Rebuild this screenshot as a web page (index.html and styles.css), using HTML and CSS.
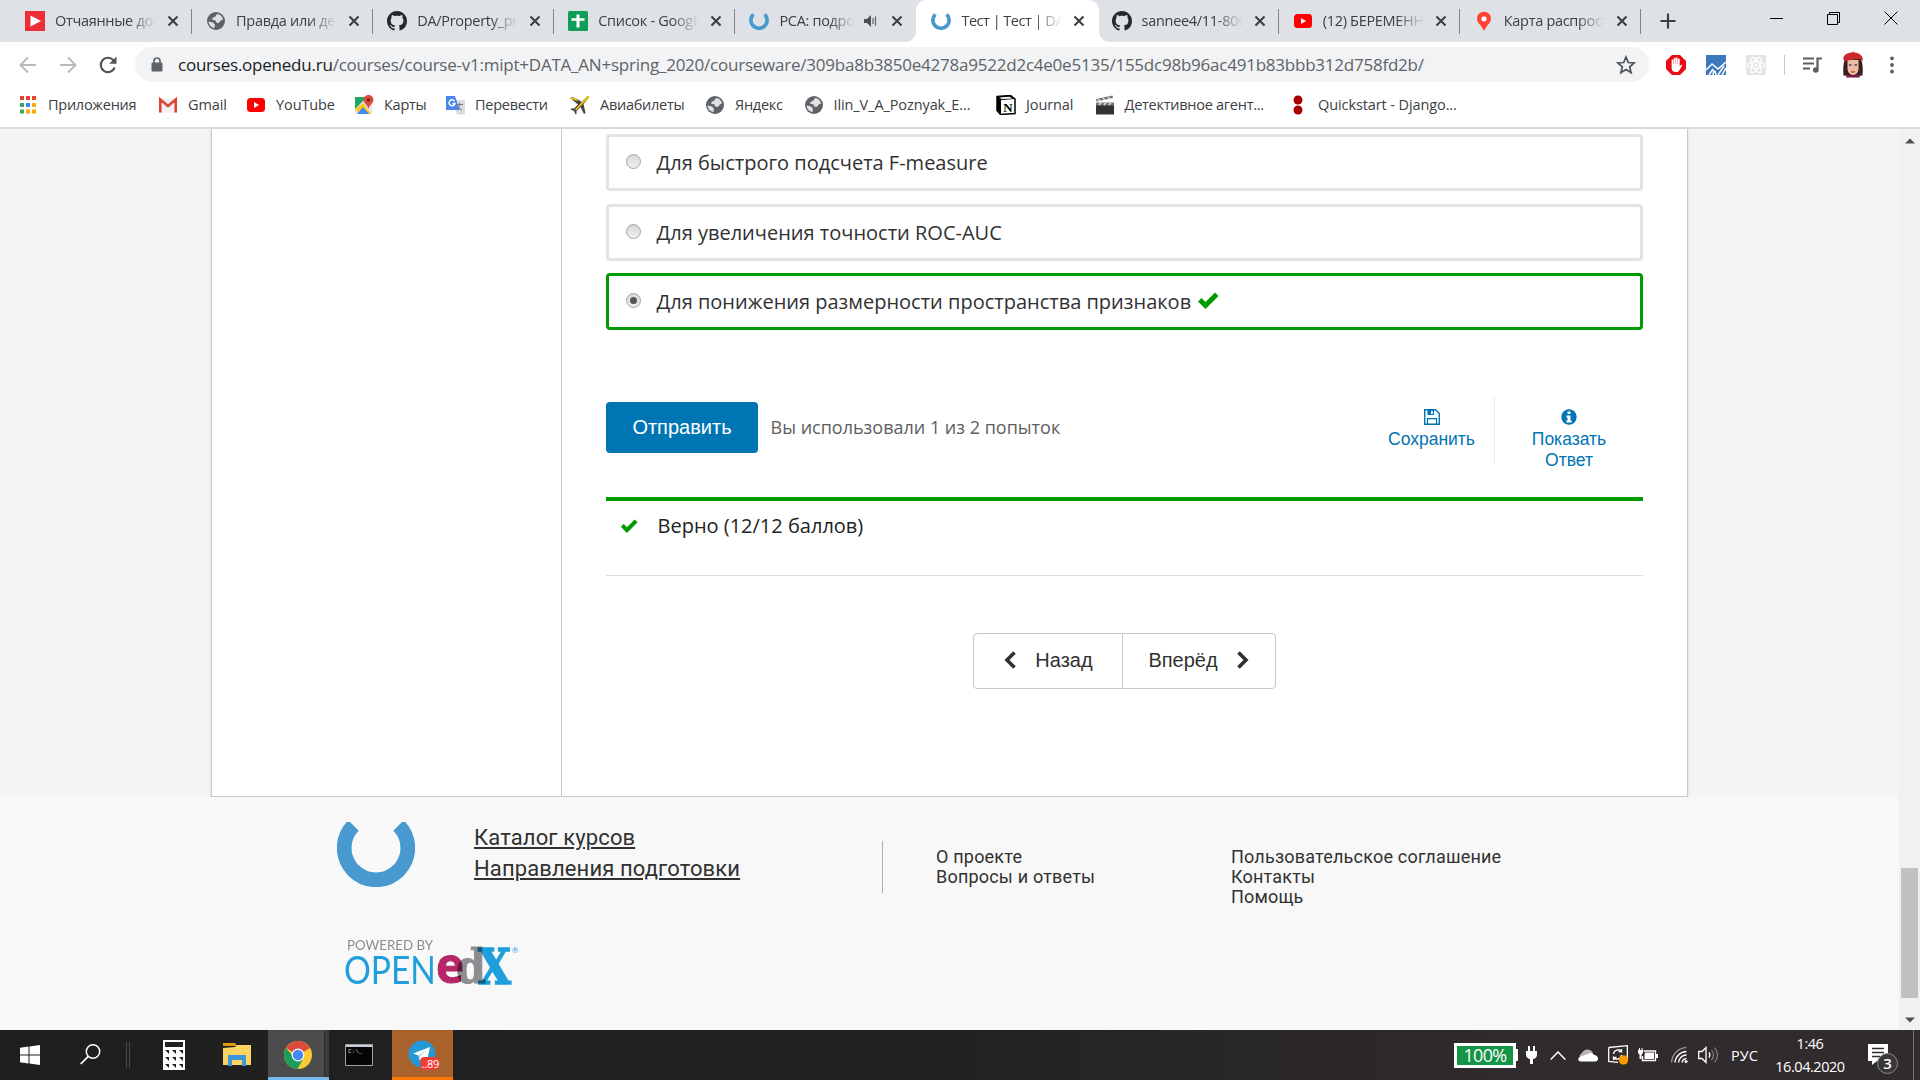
FILE: index.html
```html
<!DOCTYPE html>
<html lang="ru">
<head>
<meta charset="utf-8">
<title>Тест | Тест | DATA_AN</title>
<link rel="stylesheet" href="styles.css">
</head>
<body>
<svg class="defs" width="0" height="0">
  <symbol id="close" viewBox="0 0 12 12"><path d="M1.5 1.5l9 9M10.5 1.5l-9 9" stroke="#3c4043" stroke-width="2.1" fill="none"/></symbol>
  <symbol id="globe" viewBox="0 0 20 20"><circle cx="10" cy="10" r="9" fill="#5f6368"/><path d="M11 3c3 .3 5.6 2.600 6 5.400l-2.200 1.200-2 2.400-2.800-.6-.6-2.200-3-.2V7l3-1.500z" fill="#dee1e6"/><path d="M2.600 10.500l4.400 1 2 2.300-.5 3.200C5 16.500 2.600 13.600 2.600 10.500z" fill="#dee1e6"/></symbol>
  <symbol id="github" viewBox="0 0 16 16"><path fill="#24292e" fill-rule="evenodd" d="M8 0C3.580 0 0 3.580 0 8c0 3.540 2.290 6.530 5.470 7.590.4.070.55-.17.55-.38 0-.19-.01-.82-.01-1.490-2.010.37-2.530-.49-2.690-.94-.09-.23-.48-.94-.82-1.130-.28-.15-.68-.52-.01-.53.63-.01 1.080.58 1.230.82.72 1.210 1.870.87 2.330.66.070-.52.28-.87.51-1.070-1.780-.2-3.640-.89-3.640-3.950 0-.87.31-1.590.82-2.150-.08-.2-.36-1.020.08-2.120 0 0 .67-.21 2.200.82.640-.18 1.320-.27 2-.27s1.360.09 2 .27c1.530-1.040 2.200-.82 2.200-.82.44 1.100.16 1.920.08 2.120.51.56.82 1.270.82 2.150 0 3.070-1.870 3.750-3.650 3.950.29.25.54.73.54 1.480 0 1.070-.01 1.930-.01 2.200 0 .21.15.46.55.38A8.010 8.010 0 0 0 16 8c0-4.420-3.580-8-8-8z"/></symbol>
  <symbol id="youtube" viewBox="0 0 20 20"><rect x="1" y="3" width="18" height="14" rx="3.500" fill="#f00"/><path d="M8 7v6l5-3z" fill="#fff"/></symbol>
  <symbol id="ring" viewBox="0 0 78 78"><path d="M17 13A31.700 31.700 0 1 0 61 13" fill="none" stroke="#4799cf" stroke-width="14.500"/></symbol>
  <symbol id="check" viewBox="0 0 22 17"><path d="M1 9.500L4.500 6l4 4L18 .5 21.500 4 8.500 17z" fill="#009b00"/></symbol>
</svg>

<header class="browser">
  <div class="tabs">
    <div class="tab"><svg class="fav" viewBox="0 0 20 20"><path d="M0 0h20v20H0z" fill="#ee2e36"/><path d="M5.500 4.500v11L16 10z" fill="#fff"/></svg><span class="tab-title">Отчаянные домохозяйки</span><svg class="x"><use href="#close"/></svg></div>
    <div class="tab"><svg class="fav"><use href="#globe"/></svg><span class="tab-title">Правда или действие</span><svg class="x"><use href="#close"/></svg></div>
    <div class="tab"><svg class="fav"><use href="#github"/></svg><span class="tab-title">DA/Property_prices</span><svg class="x"><use href="#close"/></svg></div>
    <div class="tab"><svg class="fav" viewBox="0 0 20 20"><rect width="20" height="20" rx="1.500" fill="#0f9d58"/><path d="M8.500 3.500h3v3.700h5v2.600h-5v6.700h-3V9.800h-5V7.200h5z" fill="#fff"/></svg><span class="tab-title">Список - Google Таблицы</span><svg class="x"><use href="#close"/></svg></div>
    <div class="tab last"><svg class="fav"><use href="#ring"/></svg><span class="tab-title short">PCA: подробности</span><svg class="snd" viewBox="0 0 14 12"><path d="M0 4h3l4-4v12L3 8H0z" fill="#4a4d51"/><path d="M9 3v6M11.500 1.500v9" stroke="#5f6368" stroke-width="1.200"/></svg><svg class="x"><use href="#close"/></svg></div>
    <div class="tab active"><svg class="fav"><use href="#ring"/></svg><span class="tab-title">Тест | Тест | DATA_AN</span><svg class="x"><use href="#close"/></svg></div>
    <div class="tab"><svg class="fav"><use href="#github"/></svg><span class="tab-title">sannee4/11-806</span><svg class="x"><use href="#close"/></svg></div>
    <div class="tab"><svg class="fav"><use href="#youtube"/></svg><span class="tab-title">(12) БЕРЕМЕННА В 16</span><svg class="x"><use href="#close"/></svg></div>
    <div class="tab"><svg class="fav" viewBox="0 0 20 20"><path d="M10 .8c4 0 7 3 7 7 0 4.500-4.600 6.500-6.500 11.500h-1C7.600 14.300 3 12.300 3 7.800c0-4 3-7 7-7z" fill="#f43"/><circle cx="10" cy="7.800" r="2.600" fill="#fff"/></svg><span class="tab-title">Карта распространения</span><svg class="x"><use href="#close"/></svg></div>
    <svg class="plus" viewBox="0 0 16 16"><path d="M8 .5v15M.5 8h15" stroke="#3c4043" stroke-width="2.200"/></svg>
    <div class="win">
      <svg viewBox="0 0 14 14"><path d="M0 7.500h13" stroke="#000"/></svg>
      <svg viewBox="0 0 14 14"><path d="M.5 3.500h10v10H.5zM2.500 3.500v-2h10v10h-2" stroke="#000" fill="none"/></svg>
      <svg viewBox="0 0 14 14"><path d="M.5.5l13 13M13.500.5l-13 13" stroke="#000"/></svg>
    </div>
  </div>

  <div class="toolbar">
    <svg class="nav-i" viewBox="0 0 18 18"><path d="M17 9H2M9 1.500L1.500 9 9 16.500" stroke="#b8babd" stroke-width="2" fill="none"/></svg>
    <svg class="nav-i" viewBox="0 0 18 18"><path d="M1 9h15M9 1.500L16.500 9 9 16.500" stroke="#b8babd" stroke-width="2" fill="none"/></svg>
    <svg class="nav-i" viewBox="0 0 18 18"><path d="M15.700 11.500A7.200 7.200 0 1 1 14.500 4.300L16 6" stroke="#505357" stroke-width="2.100" fill="none"/><path d="M17.500.5v7.300h-7.300z" fill="#505357"/></svg>
    <div class="omni">
      <svg class="lock" viewBox="0 0 12 15"><path d="M3 6.500V4a3 3 0 0 1 6 0v2.500" fill="none" stroke="#5f6368" stroke-width="1.700"/><rect x=".5" y="5.500" width="11" height="9" rx="1.200" fill="#5f6368"/></svg>
      <span class="url"><b>courses.openedu.ru</b>/courses/course-v1:mipt+DATA_AN+spring_2020/courseware/309ba8b3850e4278a9522d2c4e0e5135/155dc98b96ac491b83bbb312d758fd2b/</span>
      <svg class="star" viewBox="0 0 20 20"><path d="M10 2l2.300 5.500 5.900.5-4.500 3.900 1.400 5.800L10 14.600l-5.100 3.100 1.400-5.800L1.800 8l5.900-.5z" fill="none" stroke="#505357" stroke-width="1.700"/></svg>
    </div>
    <div class="ext">
      <svg width="20" height="20" viewBox="0 0 20 20"><path d="M6 0h8l6 6v8l-6 6H6l-6-6V6z" fill="#e80c12"/><path d="M5.600 10V5.500a.9.900 0 0 1 1.800 0V9h.3V3.700a.9.900 0 0 1 1.800 0V9h.3V3.200a.9.900 0 0 1 1.800 0V9h.3V4.400a.9.900 0 0 1 1.800 0v7l1-1.400c.8-.7 1.600 0 1.200.8l-2.400 4.400C12.500 16.600 11.500 17 10 17c-3 0-4.400-1.500-4.400-4z" fill="#fff"/></svg>
      <svg width="20" height="20" viewBox="0 0 20 20"><path d="M0 0h20v20H0z" fill="#3c78bd"/><path d="M0 15l6-6 6 5 8-7M3 20l4-6M7 20l1-5M10 20l-1-4M12 20l6-9M16 20l4-7" stroke="#fff" stroke-width="1.500" fill="none"/></svg>
      <svg width="20" height="20" viewBox="0 0 20 20"><rect width="20" height="20" rx="1" fill="#e4e4e4"/><g fill="none" stroke="#fff" stroke-width="1.200"><ellipse cx="10" cy="10" rx="8.500" ry="3.500"/><ellipse cx="10" cy="10" rx="8.500" ry="3.500" transform="rotate(60 10 10)"/><ellipse cx="10" cy="10" rx="8.500" ry="3.500" transform="rotate(120 10 10)"/></g><circle cx="10" cy="10" r="1.700" fill="#fff"/></svg>
      <i></i>
      <svg width="20" height="20" viewBox="0 0 20 20"><path d="M1 3.500h11M1 8.500h11M1 13.500h7" stroke="#5a5d61" stroke-width="2"/><path d="M15.500 15V3.500H20" stroke="#5a5d61" stroke-width="2.200" fill="none"/><circle cx="13.800" cy="15" r="2.800" fill="#5a5d61"/></svg>
      <svg width="22" height="27" viewBox="0 0 22 27"><path d="M3 8C1 13 1 20 1.500 24.500L7 25h9l4.500-.5C21 19 21 13 19 8z" fill="#33201f"/><path d="M5 24h12l1 2.500H4z" fill="#7b1540"/><path d="M5.500 9h11v9c0 3-2.500 6-5.500 6s-5.500-3-5.500-6z" fill="#f0bda2"/><path d="M1.500 8.500C.5 4 6 1.500 10.500 1.500L11 0l1 1.500C18 1.500 22 6 20.500 10c-3-2.500-6-2-9.500-1.500-4 .6-6 1.500-8.500 2z" fill="#c9272d"/><path d="M7 14h2.500M12.500 14H15" stroke="#34495b" stroke-width="1.600"/><path d="M9 20.500q2 1.200 4 0" stroke="#c0403f" stroke-width="1.400" fill="none"/></svg>
      <svg class="dots" width="6" height="20" viewBox="0 0 6 20"><g fill="#5a5d61"><circle cx="3" cy="3.300" r="1.900"/><circle cx="3" cy="10" r="1.900"/><circle cx="3" cy="16.500" r="1.900"/></g></svg>
    </div>
  </div>

  <nav class="bookmarks">
    <a><svg viewBox="0 0 20 20"><g fill="#ea4335"><path d="M2 1h4v4H2zM8 1h4v4H8zM14 1h4v4h-4z"/></g><path d="M2 8h4v4H2zM2 14.500h4v4H2z" fill="#34a853"/><path d="M8 8h4v4H8z" fill="#4285f4"/><path d="M14 8h4v4h-4zM8 14.500h4v4H8zM14 14.500h4v4h-4z" fill="#fbab05"/></svg><span>Приложения</span></a>
    <a><svg viewBox="0 0 20 20"><path d="M1 3.500h18v14H1z" fill="#f1f1f1"/><path d="M2.300 17.500V4.500L10 11l7.700-6.500v13" stroke="#dc4437" stroke-width="2.600" fill="none"/></svg><span class="lat">Gmail</span></a>
    <a><svg><use href="#youtube"/></svg><span class="lat">YouTube</span></a>
    <a><svg viewBox="0 0 20 20"><path d="M1 2h17v17H1z" fill="#e3e4e6"/><path d="M1 2h12L1 14z" fill="#22a565"/><path d="M1 14l8-6 8 11H6z" fill="#fbc91d"/><path d="M3 19l6-7 6 7z" fill="#4688f1"/><path d="M14.500 0c3 0 5 2.200 5 4.800 0 3.400-4 5-5 9.200-1-4.200-5-5.800-5-9.200 0-2.600 2-4.800 5-4.800z" fill="#dd4b3e"/><circle cx="14.500" cy="5" r="1.800" fill="#7c231c"/></svg><span>Карты</span></a>
    <a><svg viewBox="0 0 20 20"><path d="M8 5h12v14.500h-8z" fill="#d9dbdf"/><path d="M1 1h9l4.500 14H1z" fill="#4a86ee"/><path d="M11 9.500h7M14.500 8v2c0 2-2 4-3 5M13 11.500c1 2 3 3 4 3.500" stroke="#6b7b8c" fill="none"/><path d="M9.500 6A3 3 0 1 0 10 8.500H7.500" stroke="#fff" stroke-width="1.400" fill="none"/></svg><span>Перевести</span></a>
    <a><svg viewBox="0 0 20 20"><path d="M2 2l7 3 2.500 2L17 1.500c1-.8 2.500-.5 2 1L13.500 9l2 9-1.500 1-3.500-7-4 4v3l-1 .5L4 16l-3.500-1.500.5-1h3l4-4L0 3z" fill="#47453f"/><path d="M5 14.500L17 1.500c1-.8 2.500-.5 2 1L6 15.500zM1 2l7 3-1 1-6-2z" fill="#f8c70b"/></svg><span>Авиабилеты</span></a>
    <a><svg><use href="#globe"/></svg><span>Яндекс</span></a>
    <a><svg><use href="#globe"/></svg><span class="lat">Ilin_V_A_Poznyak_E...</span></a>
    <a><svg viewBox="0 0 20 20"><path d="M1 1.500L14.500.5 19 4v14.500L4.500 19.500 1 15.500z" fill="#fff" stroke="#000" stroke-width="1.500"/><path d="M1 1.500L5 5v14L1 15.500zM1 1.500L14.500.5 19 4 5 5z" fill="#000"/><path d="M3 2.600l10.500-.8 3 1.700-10.500.5z" fill="#fff"/><text x="11.800" y="16.700" class="glyph-n">N</text></svg><span class="lat">Journal</span></a>
    <a><svg viewBox="0 0 20 20"><path d="M1 9h18v10.500H1z" fill="#333"/><path d="M1 7.500h18v3H1zM1 4L17.500.5 18 3 1.500 6.500z" fill="#777"/><path d="M3 4l2 2M8 3l2 2M13 2l2 2M4 10l2-2.500M9 10l2-2.500M14 10l2-2.500" stroke="#ddd" stroke-width="1.500"/></svg><span>Детективное агент...</span></a>
    <a><svg viewBox="0 0 20 20"><circle cx="10" cy="5" r="4.500" fill="#a80000"/><circle cx="10" cy="15" r="4.500" fill="#a80000"/></svg><span class="lat">Quickstart - Django...</span></a>
  </nav>
</header>

<div class="viewport">
  <div class="page">
    <div class="course">
      <aside class="side"></aside>
      <main class="main">
        <label class="opt"><i class="radio"></i><span>Для быстрого подсчета F-measure</span></label>
        <label class="opt"><i class="radio"></i><span>Для увеличения точности ROC-AUC</span></label>
        <label class="opt ok"><i class="radio on"></i><span>Для понижения размерности пространства признаков</span><svg class="tick"><use href="#check"/></svg></label>
        <div class="action">
          <button class="submit"><span>Отправить</span></button>
          <span class="attempts">Вы использовали 1 из 2 попыток</span>
          <div class="save"><svg viewBox="0 0 16 16"><path d="M.7.7h10.800l3.800 3.800v10.800H.7z" fill="none" stroke="#0075b4" stroke-width="1.400"/><path d="M3.500 1h6.500v5H3.500z" fill="#0075b4"/><path d="M7 2h1.800v3H7z" fill="#fff"/><path d="M3.500 15V9.700h9V15" fill="none" stroke="#0075b4" stroke-width="1.300"/></svg><span>Сохранить</span></div>
          <div class="show"><svg viewBox="0 0 16 16"><circle cx="8" cy="8" r="7.700" fill="#0075b4"/><path d="M6.500 2.500h3V5h-3zM5.500 6.500h4v5h1.200v2H5.300v-2h1.200v-3h-1z" fill="#fff"/></svg><span>Показать<br>Ответ</span></div>
        </div>
        <div class="result"><svg class="tick"><use href="#check"/></svg><span>Верно (12/12 баллов)</span></div>
        <div class="pager">
          <button><svg viewBox="0 0 12 18"><path d="M10.500 1.500L3 9l7.500 7.500" stroke="#313131" stroke-width="3.600" fill="none"/></svg><span>Назад</span></button>
          <button><span>Вперёд</span><svg viewBox="0 0 12 18"><path d="M1.500 1.500L9 9l-7.500 7.500" stroke="#313131" stroke-width="3.600" fill="none"/></svg></button>
        </div>
      </main>
    </div>
    <footer class="footer">
      <div class="foot-row">
        <svg class="logo" viewBox="0 0 78 65"><path d="M16.500 3.500A31.800 31.800 0 1 0 61.500 3.500" fill="none" stroke="#4799cf" stroke-width="14.700"/></svg>
        <div class="big"><a>Каталог курсов</a><a>Направления подготовки</a></div>
        <div class="small"><a>О проекте</a><a>Вопросы и ответы</a></div>
        <div class="small two"><a>Пользовательское соглашение</a><a>Контакты</a><a>Помощь</a></div>
      </div>
      <svg class="edx" viewBox="0 0 180 50">
        <text x="2" y="13" class="pw" textLength="86" lengthAdjust="spacingAndGlyphs">POWERED BY</text>
        <text x="-1" y="46.500" class="open" textLength="92" lengthAdjust="spacingAndGlyphs">OPEN</text>
        <text x="91" y="46" class="e" textLength="28" lengthAdjust="spacingAndGlyphs">e</text>
        <text x="111" y="46" class="d" textLength="30" lengthAdjust="spacingAndGlyphs">d</text>
        <text x="133" y="46.500" class="bx" textLength="33" lengthAdjust="spacingAndGlyphs">X</text>
        <text x="167" y="16" class="reg">®</text>
      </svg>
    </footer>
  </div>
  <div class="scroll"><svg viewBox="0 0 10 6"><path d="M0 5.500L5 .5l5 5z" fill="#505050"/></svg><i></i><svg viewBox="0 0 10 6"><path d="M0 .5l5 5 5-5z" fill="#505050"/></svg></div>
</div>

<div class="taskbar">
  <div class="t-start"><svg width="20" height="20" viewBox="0 0 20 20"><path d="M0 2.800L8.500 1.600V9.500H0zM9.500 1.400L20 0v9.500H9.500zM0 10.500h8.500v7.900L0 17.200zM9.500 10.500H20V20L9.500 18.600z" fill="#fff"/></svg></div>
  <div class="t-search"><svg width="21" height="21" viewBox="0 0 21 21"><circle cx="13" cy="7.500" r="6.700" fill="none" stroke="#fff" stroke-width="1.500"/><path d="M8.300 12.300L.7 20" stroke="#fff" stroke-width="1.700"/></svg></div>
  <div class="t-sep"></div>
  <div class="t-calc"><svg width="22" height="30" viewBox="0 0 22 30"><path d="M0 0h22v30H0z" fill="#fff"/><path d="M2 2h18v5H2zM2 10h4v4zM9 10h4v4zM16 10h4v4zM2 17h4v4zM9 17h4v4zM16 17h4v4zM2 24h4v4zM9 24h4v4zM16 24h4v4z" fill="#222"/></svg></div>
  <div class="t-folder"><svg width="28" height="24" viewBox="0 0 28 24"><path d="M0 0h12l2 3H0z" fill="#e19a05"/><path d="M0 5l12-1 2-2h14v20H0z" fill="#fdd462"/><path d="M5 23V12h18v11h-4v-6H9v6z" fill="#3c96d8"/></svg></div>
  <div class="t-chrome"><svg width="28" height="28" viewBox="0 0 28 28"><circle cx="14" cy="14" r="14" fill="#fcc934"/><path d="M14 14L1.900 7A14 14 0 0 1 26.100 7z" fill="#da4a3d"/><path d="M14 14h-6L1.900 7A14 14 0 0 0 13.500 28l5-9z" fill="#1b9d58"/><circle cx="14" cy="14" r="6.400" fill="#fff"/><circle cx="14" cy="14" r="5.200" fill="#4688f3"/></svg></div>
  <div class="t-cmd"><svg width="28" height="22" viewBox="0 0 28 22"><path d="M.5.5h27v21H.5z" fill="#050505" stroke="#9aa3ad"/><path d="M1 1h26v2H1z" fill="#c7ced6"/><text x="3" y="9" class="prompt">C:\_</text></svg></div>
  <div class="t-tg"><svg width="32" height="30" viewBox="0 0 32 30"><circle cx="14" cy="14" r="13.500" fill="#2398d5"/><path d="M5 13.500L22 7l-3 14-5-3.500-2.500 3-1-5z" fill="#fff"/><path d="M10.500 15.500L18 10l-6 6.500-.5 4z" fill="#b5cfe2"/><rect x="12.500" y="17" width="18.500" height="13" rx="4" fill="#f23c34"/><text x="13.500" y="27.500" class="badge">..89</text></svg></div>
  <div class="tray">
    <svg class="tr-bat" viewBox="0 0 64 25"><path d="M0 0h62v6h2v12h-2v7H0z" fill="#fff"/><path d="M3 3h56v19H3z" fill="#159447"/><text x="31" y="18.500" class="pct">100%</text></svg>
    <svg class="tr-plug" viewBox="0 0 11 18"><path d="M2 0h2v5h3V0h2v5h2v4c0 2-2 4-4 4v5H4v-5c-2 0-4-2-4-4V5h2z" fill="#fff"/></svg>
    <svg class="tr-up" viewBox="0 0 16 9"><path d="M.7 8.500L8 1l7.300 7.500" fill="none" stroke="#fff" stroke-width="1.500"/></svg>
    <svg class="tr-cloud" viewBox="0 0 20 13"><path d="M2 9A4 4 0 0 1 4 4a6 6 0 0 1 11 0z" fill="#b8b6b7"/><path d="M2 12.500C-.8 11.500 0 8 3 7.500l8-3c2-.8 4-.5 5 1.500 3 0 4 2.500 4 3.500 0 2-1 3-3 3z" fill="#fff"/></svg>
    <svg class="tr-upd" viewBox="0 0 21 20"><path d="M.7 2.500L19.300.7V16M10 17.300L.7 16.500v-14" fill="none" stroke="#fff" stroke-width="1.300"/><path d="M5.500 9a4.500 4.500 0 0 1 8-2.500V4M13.500 10a4.500 4.500 0 0 1-8 2.500V15M10.500 6.700h3M5.500 12.300h3" fill="none" stroke="#fff" stroke-width="1.300"/><circle cx="15.500" cy="15" r="4.700" fill="#ff9700"/></svg>
    <svg class="tr-pow" viewBox="0 0 20 14"><path d="M5.500 3h12v9.500h-13V8" fill="none" stroke="#fff" stroke-width="1.300"/><path d="M7 4.500h9V11H6.500V7zM18 6h2v4h-2zM0 2h5v3L3.500 6.500V11h-2V6.500L0 5zM1 0h1v2H1zM3.500 0h1v2h-1z" fill="#fff"/></svg>
    <svg class="tr-wifi" viewBox="0 0 17 16"><path d="M.7 15.500A15 15 0 0 1 15.500.7" stroke="#999" stroke-width="1.300" fill="none"/><path d="M4 15.500A12 12 0 0 1 15.500 4.500M7.500 15.500a8 8 0 0 1 8-7.500" stroke="#fff" stroke-width="1.400" fill="none"/><path d="M11 15.500a5 5 0 0 1 4.500-4" stroke="#fff" stroke-width="1.400" fill="none"/><circle cx="15" cy="14.500" r="1.500" fill="#fff"/></svg>
    <svg class="tr-snd" viewBox="0 0 21 18"><path d="M.7 5.500H4l4-4v15l-4-4H.7z" fill="none" stroke="#fff" stroke-width="1.300"/><path d="M11 6.500q1.800 2.500 0 5" stroke="#fff" stroke-width="1.300" fill="none"/><path d="M13.500 4q4 5 0 10M16.500 1.500q6 7.500 0 15" stroke="#858283" stroke-width="1.200" fill="none"/></svg>
    <span class="lang">РУС</span>
    <div class="clock"><span>1:46</span><span class="date">16.04.2020</span></div>
    <svg class="tr-note" viewBox="0 0 32 32"><path d="M0 1h20v17H9l-5 4v-4H0z" fill="#fff"/><path d="M4 5.500h12M4 9.500h12M4 13.500h8" stroke="#302b2d" stroke-width="1.300"/><circle cx="19.500" cy="20.500" r="10" fill="#3b3738" stroke="#8d8a8b"/><text x="19.500" y="26" class="cnt">3</text></svg>
    <i class="desk"></i>
  </div>
</div>
</body>
</html>
```
FILE: styles.css
```css
* { box-sizing: border-box; }
body {
  margin: 0; width: 1920px; height: 1080px; overflow: hidden;
  display: flex; flex-direction: column;
  font-family: "Open Sans", "Noto Sans", sans-serif; color: #313131;
}
svg { display: block; flex: none; }
button { font: inherit; margin: 0; padding: 0; border: 0; background: none; color: inherit; }
.defs { position: absolute; }

.browser { flex: none; height: 129px; border-bottom: 2px solid #dadce0; background: #fff; }
.tabs { display: flex; height: 42px; background: #dee1e6; padding-left: 11px; }
.tab { position: relative; flex: none; width: 181.100px; height: 42px; display: flex; align-items: center; padding-left: 14px; font-size: 14.500px; letter-spacing: -.3px; color: #3c4043; }
.tab::after { content: ""; position: absolute; right: 0; top: 9px; width: 1px; height: 25px; background: #808387; }
.tab.last::after { display: none; }
.fav { width: 20px; height: 20px; margin-right: 10px; }
.tab-title { width: 102px; overflow: hidden; white-space: nowrap; line-height: 24px; -webkit-mask-image: linear-gradient(90deg, #000 73px, transparent 101px); mask-image: linear-gradient(90deg, #000 73px, transparent 101px); }
.tab-title.short { width: 76px; -webkit-mask-image: linear-gradient(90deg, #000 50px, transparent 75px); mask-image: linear-gradient(90deg, #000 50px, transparent 75px); }
.snd { width: 14px; height: 12px; margin-left: 9px; margin-right: 3px; }
.x { width: 12px; height: 12px; margin-left: 10px; }
.active { background: #fff; border-radius: 10px 10px 0 0; width: 183px; margin-right: -1.900px; padding-left: 15px; letter-spacing: -.5px; z-index: 1; }
.active::before, .active::after { content: ""; position: absolute; top: auto; bottom: 0; width: 10px; height: 10px; }
.active::before { left: -10px; background: radial-gradient(circle at 0 0, transparent 9.500px, #fff 10px); }
.active::after { right: -10px; background: radial-gradient(circle at 100% 0, transparent 9.500px, #fff 10px); }
.plus { width: 16px; height: 16px; margin: 13px 0 0 19.500px; }
.win { margin-left: auto; display: flex; gap: 43px; padding: 11px 22px 0 0; }
.win svg { width: 14px; height: 14px; }

.toolbar { display: flex; align-items: center; height: 45px; padding-left: 19px; }
.nav-i { width: 18px; height: 18px; margin-right: 22px; }
.nav-i:nth-child(3) { margin-right: 18px; }
.omni { display: flex; align-items: center; width: 1514px; height: 35px; border-radius: 18px; background: #f1f3f4; padding: 0 13px 0 16px; }
.lock { width: 12px; height: 15px; }
.url { margin-left: 15px; font-size: 17px; letter-spacing: -.23px; color: #5f6368; white-space: nowrap; }
.url b { font-weight: 400; color: #202124; }
.star { width: 20px; height: 20px; margin-left: auto; }
.ext { display: flex; align-items: center; padding-left: 17px; gap: 20px; }
.ext i { width: 1px; height: 20px; background: #c5c7ca; margin: 0 -3px 0 -2px; }
.dots { margin-left: 5px; }

.bookmarks { display: grid; grid-template-columns: 140px 88px 108px 91px 125px 135px 98.500px 192.500px 98.500px 193.500px 170px; height: 36px; align-items: center; padding-left: 18px; font-size: 14.500px; letter-spacing: -.26px; color: #3c4043; }
.bookmarks a { display: flex; align-items: center; white-space: nowrap; }
.bookmarks span { padding-bottom: 2px; }
.bookmarks svg { width: 20px; height: 20px; margin-right: 10px; }
.bookmarks .lat { letter-spacing: -.1px; }
.glyph-n { font: bold 13px "Liberation Serif", serif; text-anchor: middle; }

.viewport { flex: none; display: flex; height: 901px; }
.page { flex: 1; background: #f4f4f4; }
.course { width: 1477px; height: 668px; margin-left: 211px; display: flex; background: #fff; border: 1px solid #c8c8c8; border-top: 0; box-shadow: 0 1px 3px rgba(0,0,0,.12); }
.side { width: 350px; border-right: 1px solid #c8c8c8; }
.main { flex: 1; padding: 5px 44px 0; }
.opt { display: flex; align-items: center; height: 57px; border: 3px solid #e3e3e3; border-radius: 4px; padding-left: 17px; margin-bottom: 13px; font-size: 20px; line-height: 30px; }
.opt:nth-child(2) { margin-bottom: 12px; }
.ok { border-color: #009b00; }
.radio { width: 15px; height: 15px; border: 1px solid #a3a3a3; border-radius: 50%; margin-right: 15.500px; margin-top: -2px; background: linear-gradient(#d8d8d8, #efefef); display: flex; align-items: center; justify-content: center; }
.on::after { content: ""; width: 7px; height: 7px; border-radius: 50%; background: #555; }
.opt .tick { width: 22px; height: 17px; margin-left: 5.500px; margin-top: -3px; }
.action { display: flex; height: 95px; margin-top: 72px; }
.submit { width: 152px; height: 51px; border-radius: 4px; background: #0075b4; color: #fff; font: 20px "Liberation Sans", sans-serif; }
.attempts { margin-left: 12.500px; font-size: 18px; line-height: 51px; color: #5e5e5e; }
.save, .show { display: flex; flex-direction: column; align-items: center; font: 17.500px/21px "Liberation Sans", sans-serif; color: #0075b4; text-align: center; }
.save svg, .show svg { width: 16px; height: 16px; margin-bottom: 4px; }
.save { margin-left: auto; width: 126px; height: 68px; margin-top: -6px; padding-top: 13px; border-right: 1px solid #ededed; }
.show { width: 148px; padding-top: 7px; }
.result { display: flex; align-items: flex-start; height: 79px; border-top: 4px solid #009b00; border-bottom: 1px solid #ddd; padding: 10px 0 0 14px; font-size: 20px; line-height: 30px; color: #222; }
.result .tick { width: 18px; height: 14px; margin: 8px 19.500px 0 0; }
.pager { display: flex; width: 303px; height: 56px; margin: 57px auto 0 367px; border: 1px solid #c8c8c8; border-radius: 4px; font: 20px "Liberation Sans", sans-serif; }
.pager button { display: flex; align-items: center; justify-content: center; gap: 19px; width: 148px; padding: 0 0 2px 1px; }
.pager button + button { width: 153px; border-left: 1px solid #c8c8c8; padding: 0 1px 2px 0; }
.pager svg { width: 12px; height: 18px; }

.footer { height: 233px; background: #f8f8f8; padding-top: 25px; }
.foot-row { display: flex; height: 118px; padding-left: 337px; }
.logo { width: 78px; height: 65px; }
.big { display: flex; flex-direction: column; width: 408px; height: 52px; margin-left: 59px; font: 22px/31px Roboto, sans-serif; letter-spacing: .12px; text-decoration: underline; }
.small { display: flex; flex-direction: column; width: 350px; height: 52px; margin-top: 19px; padding: 6px 0 0 53px; border-left: 1px solid #b0b0b0; font: 18px/20px Roboto, sans-serif; letter-spacing: .2px; }
.small.two { border: 0; padding-left: 0; margin-left: -1px; }
.edx { width: 180px; height: 50px; margin-left: 345px; margin-top: -3px; isolation: isolate; }
.pw { font: 13.500px Lato, sans-serif; fill: #8b8d8f; }
.open { font: 39px Lato, sans-serif; fill: #1f9fdb; }
.e { font: bold 49px "Open Sans", sans-serif; fill: #b72667; stroke: #b72667; stroke-width: 1px; }
.d { font: bold 47px "DejaVu Serif", serif; fill: #8c8d90; stroke: #8c8d90; stroke-width: 1px; mix-blend-mode: multiply; }
.bx { font: bold 48px "DejaVu Serif", serif; fill: #1f9fdb; stroke: #1f9fdb; stroke-width: 1.500px; mix-blend-mode: multiply; }
.reg { font: 8px Lato, sans-serif; fill: #1f9fdb; }

.scroll { width: 21px; background: #f1f1f1; display: flex; flex-direction: column; align-items: center; padding: 9px 0 7px; }
.scroll svg { width: 10px; height: 6px; }
.scroll i { width: 17px; height: 130px; background: #c1c1c1; margin-top: auto; margin-bottom: 19px; }

.taskbar { flex: none; height: 50px; display: flex; background: linear-gradient(90deg, #1f1f1f, #232222 50%, #302b2d 80%); color: #fff; }
.taskbar > div { display: flex; align-items: center; justify-content: center; }
.t-start { width: 60px; }
.t-search { width: 61px; padding-bottom: 2px; }
.t-sep { width: 4px; height: 26px; margin: 12px 0 0 5px; border: solid #4a4a4a; border-width: 0 1px; }
.t-calc { width: 88px; margin-right: -11px; }
.t-folder { width: 58px; margin: 0 2px 0 1px; }
.t-chrome { width: 61px; background: linear-gradient(90deg, #4c4c4c 56px, #2b2b2b 56px, #2b2b2b 57px, #3c3c3c 57px); border-bottom: 3px solid #76b9ed; padding: 2px 1px 0 0; }
.t-cmd { width: 63px; padding: 0 3px 1px 0; }
.t-tg { width: 61px; background: #a9622b; border-bottom: 3px solid #ff7800; padding-left: 3px; padding-top: 2px; }
.prompt { font: 6px "Liberation Mono", monospace; fill: #ddd; }
.badge { font: 11px "Open Sans", sans-serif; letter-spacing: -.2px; fill: #fff; }
.taskbar > .tray { margin-left: auto; justify-content: flex-start; width: 466px; height: 50px; }
.tr-bat { width: 64px; height: 25px; }
.pct { font: 18px "Open Sans", sans-serif; letter-spacing: -.7px; fill: #fff; text-anchor: middle; }
.tr-plug { width: 11px; height: 18px; margin-left: 8px; }
.tr-up { width: 16px; height: 9px; margin-left: 13px; }
.tr-cloud { width: 20px; height: 13px; margin-left: 12px; }
.tr-upd { width: 21px; height: 20px; margin-left: 10px; }
.tr-pow { width: 20px; height: 14px; margin-left: 9px; }
.tr-wifi { width: 17px; height: 16px; margin-left: 13px; }
.tr-snd { width: 21px; height: 18px; margin-left: 10px; }
.lang { width: 27px; margin-left: 12px; font-size: 14.500px; }
.clock { width: 80px; margin-left: 12px; display: flex; flex-direction: column; align-items: center; font-size: 14.500px; letter-spacing: -.45px; line-height: 23px; }
.tr-note { width: 32px; height: 32px; margin-left: 18px; margin-top: 7px; }
.cnt { font: 600 15px "Open Sans", sans-serif; fill: #fff; text-anchor: middle; }
.desk { width: 1px; height: 50px; margin-left: 13px; background: #77736f; }
```
